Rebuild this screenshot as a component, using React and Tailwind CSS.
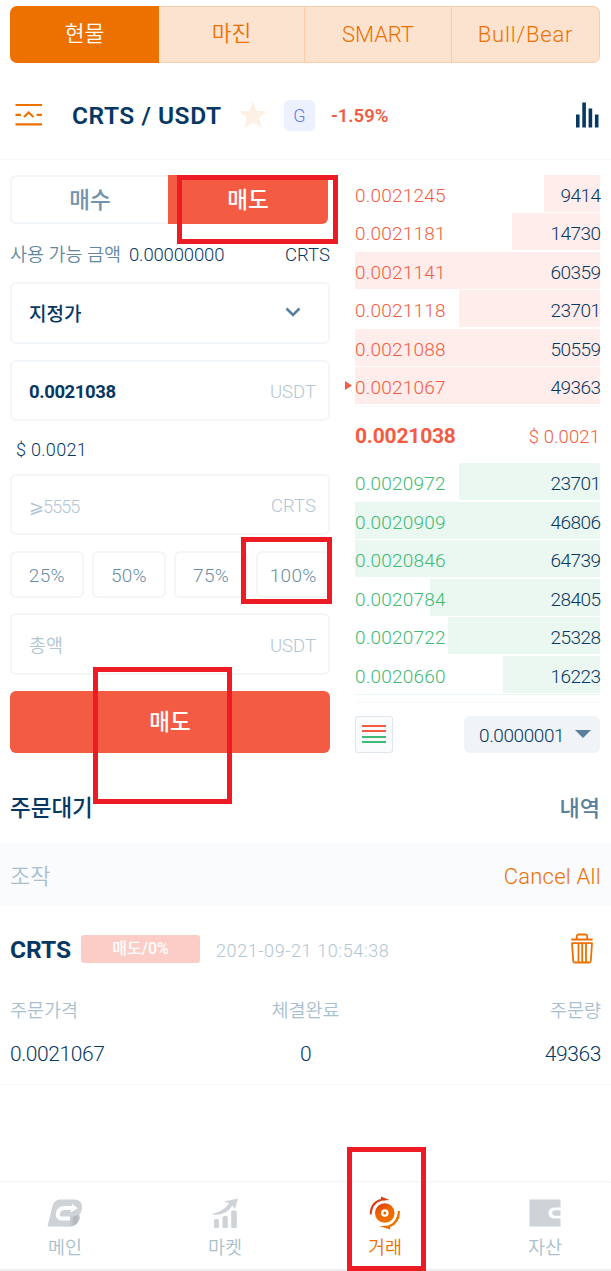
import React from "react";

const tabs = [
  { label: "현물", cls: "w-[149px] rounded-l-[7px] bg-[#ed7100] text-white text-[21.5px]" },
  { label: "마진", cls: "w-[146px] border-y border-r bg-[#fce3cf] text-[#ed7100] text-[21.5px]" },
  { label: "SMART", cls: "w-[147px] border-y border-r bg-[#fce3cf] text-[#ed7100] text-[22px] pt-[2px] tracking-[-0.1px]" },
  { label: "Bull/Bear", cls: "w-[148px] rounded-r-[7px] border-y border-r bg-[#fce3cf] text-[#ed7100] text-[22px] pt-[2px] tracking-[0.8px]" },
];

const asks = [
  ["0.0021245", "9414", "w-[56px]"],
  ["0.0021181", "14730", "w-[88px]"],
  ["0.0021141", "60359", "w-full"],
  ["0.0021118", "23701", "w-[141px]"],
  ["0.0021088", "50559", "w-full"],
  ["0.0021067", "49363", "w-full"],
];

const bids = [
  ["0.0020972", "23701", "w-[141px]"],
  ["0.0020909", "46806", "w-full"],
  ["0.0020846", "64739", "w-full"],
  ["0.0020784", "28405", "w-[170px]"],
  ["0.0020722", "25328", "w-[152px]"],
  ["0.0020660", "16223", "w-[97px]"],
];

function BookRow({ price, amount, width, bar, color, marker }) {
  return (
    <div className="relative h-[38.5px] flex justify-between leading-[42px] text-[19px] font-[350]">
      <div className={`absolute right-0 top-0 h-[37px] ${width} ${bar}`} />
      {marker && (
        <svg className="absolute left-[-10px] top-[14px]" width="7" height="9" viewBox="0 0 7 9">
          <path d="M0 0L7 4.5L0 9Z" fill="#f35c42" />
        </svg>
      )}
      <span className={`relative tracking-[0.2px] ${color}`}>{price}</span>
      <span className="relative mr-[-0.5px] tracking-[-0.55px] text-[#073763]">{amount}</span>
    </div>
  );
}

function Field({ className, left, leftClass, right }) {
  return (
    <div className={`flex items-center justify-between rounded-[6px] border-2 border-[#f2f6f8] pl-[17px] pr-[12px] pt-[5px] ${className}`}>
      <span className={leftClass}>{left}</span>
      <span className="text-[18.5px] font-[350] text-[#b2c5d2]">{right}</span>
    </div>
  );
}

function ModeIcon() {
  return (
    <svg width="28" height="24" viewBox="0 0 28 24" fill="none" stroke="#ed7100" strokeWidth="2.2">
      <path d="M0.5 2H27M0.5 21.3H27M0.5 11.8H6M21.5 11.8H27" />
      <path d="M9 14L13.7 9.5L18.5 14" />
    </svg>
  );
}

function TrashIcon() {
  return (
    <svg width="24" height="31" viewBox="0 0 24 31" fill="none" stroke="#ed7100" strokeWidth="1.8" strokeLinejoin="round" strokeLinecap="round">
      <path d="M2 6.5H22M6.8 6V3.5Q6.8 1.5 8.6 1.5H15.4Q17.2 1.5 17.2 3.5V6" />
      <path d="M2 10.2H22L20.8 27.8Q20.7 29.5 19 29.5H5Q3.3 29.5 3.2 27.8Z" />
      <path d="M8.5 11V29M12.2 11V29M16 11V29" />
    </svg>
  );
}

function HomeIcon() {
  return (
    <svg width="36" height="28" viewBox="0 0 36 28">
      <defs>
        <linearGradient id="fold" x1="0" x2="1">
          <stop offset="0.3" stopColor="#ced3d7" />
          <stop offset="0.75" stopColor="#b1b5b9" />
          <stop offset="1" stopColor="#c5cacd" />
        </linearGradient>
      </defs>
      <path d="M0.5 27.5L5.2 8Q7 0.5 13 0.5H28Q35 1 35 8Q35 14 31 16.5Q34 19 31 23Q28 27.5 22 27.5Z" fill="#ced3d7" />
      <path d="M17 21L32 15.5Q34 19 31 23Q28 27.5 22 27.5H17Z" fill="url(#fold)" />
      <path d="M25 9H17.5Q12 9 11 14Q10 19.5 15 19.5H23" fill="none" stroke="#fff" strokeWidth="4" />
      <path d="M25 5L31 9.2L23.5 13.5Z" fill="#fff" />
    </svg>
  );
}

function MarketIcon() {
  return (
    <svg width="28" height="30" viewBox="0 0 28 30" fill="#ced3d7">
      <path d="M0.5 16.3Q13 13 18 5.2L13 3.6L27 0.5L24 11L21.5 7.5Q14 19 0.5 16.3Z" />
      <rect x="3" y="21" width="5" height="9" rx="1.5" />
      <rect x="11.5" y="18" width="5.3" height="12" rx="1.5" />
      <rect x="20.2" y="12.5" width="5.6" height="17.5" rx="1.5" />
    </svg>
  );
}

function TradeIcon() {
  return (
    <svg width="32" height="34" viewBox="0 0 32 34">
      <defs>
        <linearGradient id="hot" x1="0" y1="0" x2="0.6" y2="1">
          <stop offset="0" stopColor="#d93414" />
          <stop offset="0.5" stopColor="#ed6500" />
          <stop offset="1" stopColor="#ed7100" />
        </linearGradient>
      </defs>
      <circle cx="15.8" cy="17" r="9.8" fill="url(#hot)" />
      <circle cx="15.8" cy="17" r="3.8" fill="#fff" />
      <circle cx="15.8" cy="17" r="1.5" fill="#ed6500" />
      <path d="M0.8 18.5Q0.6 5.8 12 3V0.5L20.5 4L12.5 4.8Q3.2 7.5 2.5 18.5Z" fill="#dc3c12" />
      <path d="M31 15Q31.2 27.5 21.2 31V33.5L10.5 30.3L19.5 29.5Q28 26.5 29 15Z" fill="#ed7100" />
    </svg>
  );
}

function WalletIcon() {
  return (
    <svg width="32" height="28" viewBox="0 0 32 28">
      <path d="M0.5 0.5H31.5V8.5H25Q19.5 9 19.5 14Q19.5 19 25 19.5H31.5V27.5H0.5Z" fill="#ced3d7" />
      <path d="M31.5 11.3H26Q23.3 11.5 23.3 14Q23.3 16.5 26 16.7H31.5Z" fill="#ced3d7" />
    </svg>
  );
}

const nav = [
  ["메인", HomeIcon, "text-[#a9bfce]"],
  ["마켓", MarketIcon, "text-[#a9bfce]"],
  ["거래", TradeIcon, "text-[#ed7100]"],
  ["자산", WalletIcon, "text-[#a9bfce]"],
];

export default function App() {
  return (
    <div className="relative flex h-[1271px] w-[611px] flex-col overflow-hidden whitespace-nowrap bg-white font-['Roboto','Noto_Sans_CJK_KR',sans-serif] leading-none text-[#073763]">
      <div className="mt-[5.5px] ml-[10px] flex h-[57px] shrink-0">
        {tabs.map((t) => (
          <div key={t.label} className={`flex items-center justify-center border-[#f8cda8] font-[350] ${t.cls}`}>
            {t.label}
          </div>
        ))}
      </div>

      <header className="flex h-[97px] shrink-0 items-center border-b-[1.5px] border-[#f8f9fb] pl-[15px] pt-[9px]">
        <ModeIcon />
        <h1 className="ml-[29px] w-[149px] pt-[3px] text-[24.5px] font-semibold tracking-[0.55px]">CRTS / USDT</h1>
        <svg className="ml-[18px]" width="28" height="28" viewBox="0 0 28 28">
          <path d="M14 0.5L17.8 9.8L27.5 10.5L20 17L22.8 27L14 21.5L5.2 27L7.8 17L0.5 10.5L10.2 9.8Z" fill="#fdf0e4" />
        </svg>
        <span className="ml-[17px] flex h-[31px] w-[31px] items-center justify-center rounded-[5px] bg-[#edf0fe] pt-[2px] text-[18px] font-[350] text-[#5b7cf0]">G</span>
        <span className="ml-[16px] pt-[3px] text-[18.5px] font-semibold text-[#f35c42]">-1.59%</span>
        <svg className="mr-[12px] ml-auto" width="23" height="26" viewBox="0 0 23 26" fill="#073763">
          <path d="M0 12.5H3.6V25.5H0ZM6.3 0.5H9.9V25.5H6.3ZM12.6 6.5H16.2V25.5H12.6ZM18.9 12.5H22.5V25.5H18.9Z" />
        </svg>
      </header>

      <main className="flex h-[626px] shrink-0 pt-[15px] pl-[10px]">
        <section className="flex w-[320px] flex-col">
          <div className="flex h-[49px]">
            <div className="flex w-[158px] items-center justify-center rounded-l-[6px] border-2 border-r-0 border-[#f2f6f8] pt-[2px] text-[22.5px] font-medium text-[#7393aa]">매수</div>
            <div className="flex w-[160px] items-center justify-center rounded-r-[6px] bg-[#f35c42] pt-[2px] text-[22.5px] font-medium text-white">매도</div>
          </div>
          <div className="flex h-[58px] items-center pt-[6px] text-[18.5px] font-[350]">
            <span className="w-[119px] text-[#6488a0]">사용 가능 금액</span>
            <span className="tracking-[-0.15px]">0.00000000</span>
            <span className="ml-auto">CRTS</span>
          </div>
          <div className="flex h-[62px] items-center justify-between rounded-[6px] border-2 border-[#f2f6f8] pl-[17px] pr-[27px]">
            <span className="pt-[4px] text-[19px] font-medium">지정가</span>
            <svg width="16" height="11" viewBox="0 0 16 11" fill="none" stroke="#56809b" strokeWidth="2.5">
              <path d="M1.5 1.5L8 8L14.5 1.5" />
            </svg>
          </div>
          <Field className="mt-[16px] h-[61px]" left="0.0021038" leftClass="text-[18.5px] font-bold tracking-[-0.4px]" right="USDT" />
          <div className="flex h-[53px] items-center pl-[6px] pt-[5px] text-[18px] font-[350] tracking-[0.3px]">$ 0.0021</div>
          <Field className="h-[61px]" left="⩾5555" leftClass="flex items-center text-[18px] font-[350] tracking-[-0.9px] text-[#b2c5d2]" right="CRTS" />
          <div className="mt-[16px] grid h-[47px] grid-cols-4 gap-[8.5px]">
            {["25%", "50%", "75%", "100%"].map((p) => (
              <div key={p} className="flex items-center justify-center rounded-[6px] border-2 border-[#f2f6f8] pt-[2px] text-[19px] font-[350] tracking-[0.3px] text-[#6b8da5]">{p}</div>
            ))}
          </div>
          <Field className="mt-[15px] h-[62px]" left="총액" leftClass="text-[18.5px] font-[350] text-[#b2c5d2]" right="USDT" />
          <div className="mt-[16px] flex h-[62px] items-center justify-center rounded-[6px] bg-[#f35c42] pt-[2px] text-[22.5px] font-medium text-white">매도</div>
        </section>

        <section className="ml-[25px] flex w-[245px] flex-col">
          {asks.map(([p, a, w], i) => (
            <BookRow key={p} price={p} amount={a} width={w} bar="bg-[#feedeb]" color="text-[#f35c42]" marker={i === 5} />
          ))}
          <div className="flex h-[57.5px] items-center justify-between border-t border-[#f6f8fa] pt-[4px] text-[#f35c42]">
            <span className="text-[21px] font-bold tracking-[-0.2px]">0.0021038</span>
            <span className="text-[18.5px] font-[350] tracking-[0.1px]">$ 0.0021</span>
          </div>
          {bids.map(([p, a, w]) => (
            <BookRow key={p} price={p} amount={a} width={w} bar="bg-[#eaf8f1]" color="text-[#3dba74]" />
          ))}
          <div className="h-[9px] border-t border-t-[#eaf8f1] border-b-[1.5px] border-b-[#f7f8fa]" />
          <div className="mt-[12.5px] flex h-[37px] justify-between">
            <div className="flex w-[38px] flex-col items-center justify-center gap-[3.4px] rounded-[3px] border-[1.5px] border-[#dfe6ed] bg-[#fafbfd]">
              <i className="h-[2px] w-[24px] bg-[#f35c42]" />
              <i className="h-[2px] w-[24px] bg-[#f35c42]" />
              <i className="h-[2px] w-[24px] bg-[#3dba74]" />
              <i className="h-[2px] w-[24px] bg-[#3dba74]" />
            </div>
            <div className="flex w-[136px] items-center justify-between rounded-[6px] bg-[#f0f3f7] pl-[15px] pr-[9px] text-[19px] font-[350] tracking-[-0.4px]">
              <span className="pt-[3px]">0.0000001</span>
              <svg width="16" height="8" viewBox="0 0 16 8"><path d="M0 0H16L8 8Z" fill="#56809b" /></svg>
            </div>
          </div>
        </section>
      </main>

      <div className="flex h-[57px] shrink-0 items-center justify-between pb-[11px] pl-[10px] pr-[11px] text-[22.5px] font-medium">
        <span>주문대기</span>
        <span className="text-[22px] text-[#56809b]">내역</span>
      </div>
      <div className="flex h-[62px] shrink-0 items-center justify-between bg-[#fafbfd] pl-[10px] pr-[10px] pt-[6px] text-[22px] font-[350]">
        <span className="text-[#a9bfce]">조작</span>
        <span className="tracking-[0.25px] text-[#ed7100]">Cancel All</span>
      </div>

      <article className="flex h-[180px] shrink-0 flex-col border-b-[1.5px] border-[#f6f8fa] px-[10px]">
        <div className="mt-[28px] flex h-[32px] items-center">
          <span className="w-[71px] pt-[3px] text-[24.5px] font-bold">CRTS</span>
          <span className="flex h-[28px] w-[119px] items-center justify-center rounded-[3px] bg-[#fccdc6] pt-[1px] text-[16px] font-medium text-white">매도/0%</span>
          <span className="ml-[16px] pt-[5px] text-[18px] font-[350] tracking-[0.6px] text-[#b2c5d2]">2021-09-21 10:54:38</span>
          <span className="mr-[7px] ml-auto"><TrashIcon /></span>
        </div>
        <div className="mt-[37px] grid grid-cols-[1fr_1fr_1fr] text-[18.5px] font-[350] text-[#a9bfce]">
          <span>주문가격</span>
          <span className="text-center">체결완료</span>
          <span className="text-right">주문량</span>
        </div>
        <div className="mt-[23.5px] grid grid-cols-[1fr_1fr_1fr] text-[21px] font-[350] tracking-[-0.4px]">
          <span>0.0021067</span>
          <span className="text-center">0</span>
          <span className="text-right">49363</span>
        </div>
      </article>

      <nav className="mt-auto flex h-[90px] shrink-0 gap-[30px] border-y-2 border-t-[#f8f8f8] border-b-[#eeeeee] shadow-[0_-1px_3px_rgba(0,0,0,0.02)]">
        {nav.map(([label, Icon, color]) => (
          <div key={label} className="flex w-[130px] shrink-0 flex-col items-center">
            <span className="mt-[13px] flex h-[34px] items-center"><Icon /></span>
            <span className={`mt-[9px] text-[18.5px] font-[350] ${color}`}>{label}</span>
          </div>
        ))}
      </nav>

      <div className="absolute left-[177px] top-[175px] h-[69px] w-[161px] border-[5px] border-[#ed1c24]" />
      <div className="absolute left-[241px] top-[537px] h-[67px] w-[91px] border-[5px] border-[#ed1c24]" />
      <div className="absolute left-[93px] top-[667px] h-[137px] w-[139px] border-[5px] border-[#ed1c24]" />
      <div className="absolute left-[347px] top-[1147px] h-[124px] w-[79px] border-[5px] border-[#ed1c24]" />
    </div>
  );
}
